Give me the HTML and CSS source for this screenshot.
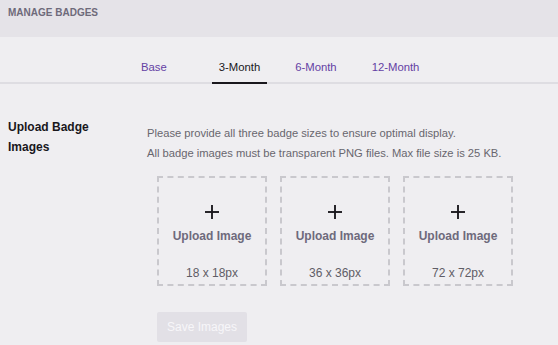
FILE: index.html
```html
<!DOCTYPE html>
<html lang="en">
<head>
  <meta charset="UTF-8">
  <title>Manage Badges</title>
  <link rel="stylesheet" href="styles.css">
</head>
<body>
  <!-- Header -->
  <div class="page-header">
    <h1 class="page-title">MANAGE BADGES</h1>
  </div>

  <!-- Tabs -->
  <div class="tab-bar">
    <a class="tab tab-base">Base</a>
    <a class="tab active">3-Month</a>
    <a class="tab">6-Month</a>
    <a class="tab">12-Month</a>
  </div>

  <!-- Upload Section -->
  <div class="upload-section">
    <div class="section-label">Upload Badge Images</div>
    <div class="section-body">
      <p class="description">Please provide all three badge sizes to ensure optimal display.<br>All badge images must be transparent PNG files. Max file size is 25 KB.</p>

      <div class="upload-row">
        <div class="upload-box">
          <svg class="plus-icon" viewBox="0 0 15 15">
            <line x1="7.5" y1="0" x2="7.5" y2="15"></line>
            <line x1="0" y1="7.5" x2="15" y2="7.5"></line>
          </svg>
          <div class="upload-text">Upload Image</div>
          <div class="upload-size">18 x 18px</div>
        </div>
        <div class="upload-box">
          <svg class="plus-icon" viewBox="0 0 15 15">
            <line x1="7.5" y1="0" x2="7.5" y2="15"></line>
            <line x1="0" y1="7.5" x2="15" y2="7.5"></line>
          </svg>
          <div class="upload-text">Upload Image</div>
          <div class="upload-size">36 x 36px</div>
        </div>
        <div class="upload-box">
          <svg class="plus-icon" viewBox="0 0 15 15">
            <line x1="7.5" y1="0" x2="7.5" y2="15"></line>
            <line x1="0" y1="7.5" x2="15" y2="7.5"></line>
          </svg>
          <div class="upload-text">Upload Image</div>
          <div class="upload-size">72 x 72px</div>
        </div>
      </div>

      <button class="save-button" disabled>Save Images</button>
    </div>
  </div>
</body>
</html>
```

FILE: styles.css
```css
* {
  margin: 0;
  padding: 0;
  box-sizing: border-box;
}

body {
  background: #efeef1;
  font-family: "Liberation Sans", Arial, sans-serif;
  font-size: 12px;
  color: #19171c;
  min-height: 100vh;
}

.page-header {
  height: 37px;
  padding: 6px 8px 0;
  background: #e5e3e8;
}

.page-title {
  font-size: 10px;
  line-height: 13px;
  font-weight: 700;
  color: #6e6a7a;
}

.tab-bar {
  display: flex;
  gap: 21px;
  padding-left: 134px;
  border-bottom: 2px solid #dedde2;
}

.tab {
  display: block;
  padding: 22px 7px 7px;
  line-height: 16px;
  font-size: 11.3px;
  color: #6441a4;
  border-bottom: 2px solid transparent;
  margin-bottom: -2px;
  cursor: pointer;
}

.tab-base {
  margin-right: 17px;
}

.tab.active {
  color: #19171c;
  border-bottom-color: #19171c;
}

.upload-section {
  display: flex;
  padding-top: 33px;
}

.section-label {
  width: 147px;
  padding: 0 40px 0 8px;
  font-weight: 700;
  line-height: 20px;
  color: #19171c;
}

.section-body {
  padding-top: 6px;
}

.description {
  font-size: 11.2px;
  line-height: 20px;
  color: #68666e;
}

.upload-row {
  display: flex;
  gap: 13px;
  margin: 13px 0 0 10px;
}

.upload-box {
  width: 110px;
  height: 110px;
  border: 2px dashed #c9c8cd;
  display: flex;
  flex-direction: column;
  align-items: center;
  padding-top: 27px;
  cursor: pointer;
}

.plus-icon {
  width: 14px;
  height: 14px;
  stroke: #19171c;
  stroke-width: 2;
}

.upload-text {
  margin-top: 9px;
  line-height: 16px;
  font-weight: 700;
  color: #6e6a7c;
}

.upload-size {
  margin-top: 21px;
  line-height: 16px;
  color: #5f5d66;
}

.save-button {
  display: block;
  height: 30px;
  margin: 26px 0 0 10px;
  padding: 0 10px;
  border: none;
  border-radius: 2px;
  background: #e2e0e6;
  color: #f7f6f9;
  font-family: inherit;
  font-size: 12px;
}
```
